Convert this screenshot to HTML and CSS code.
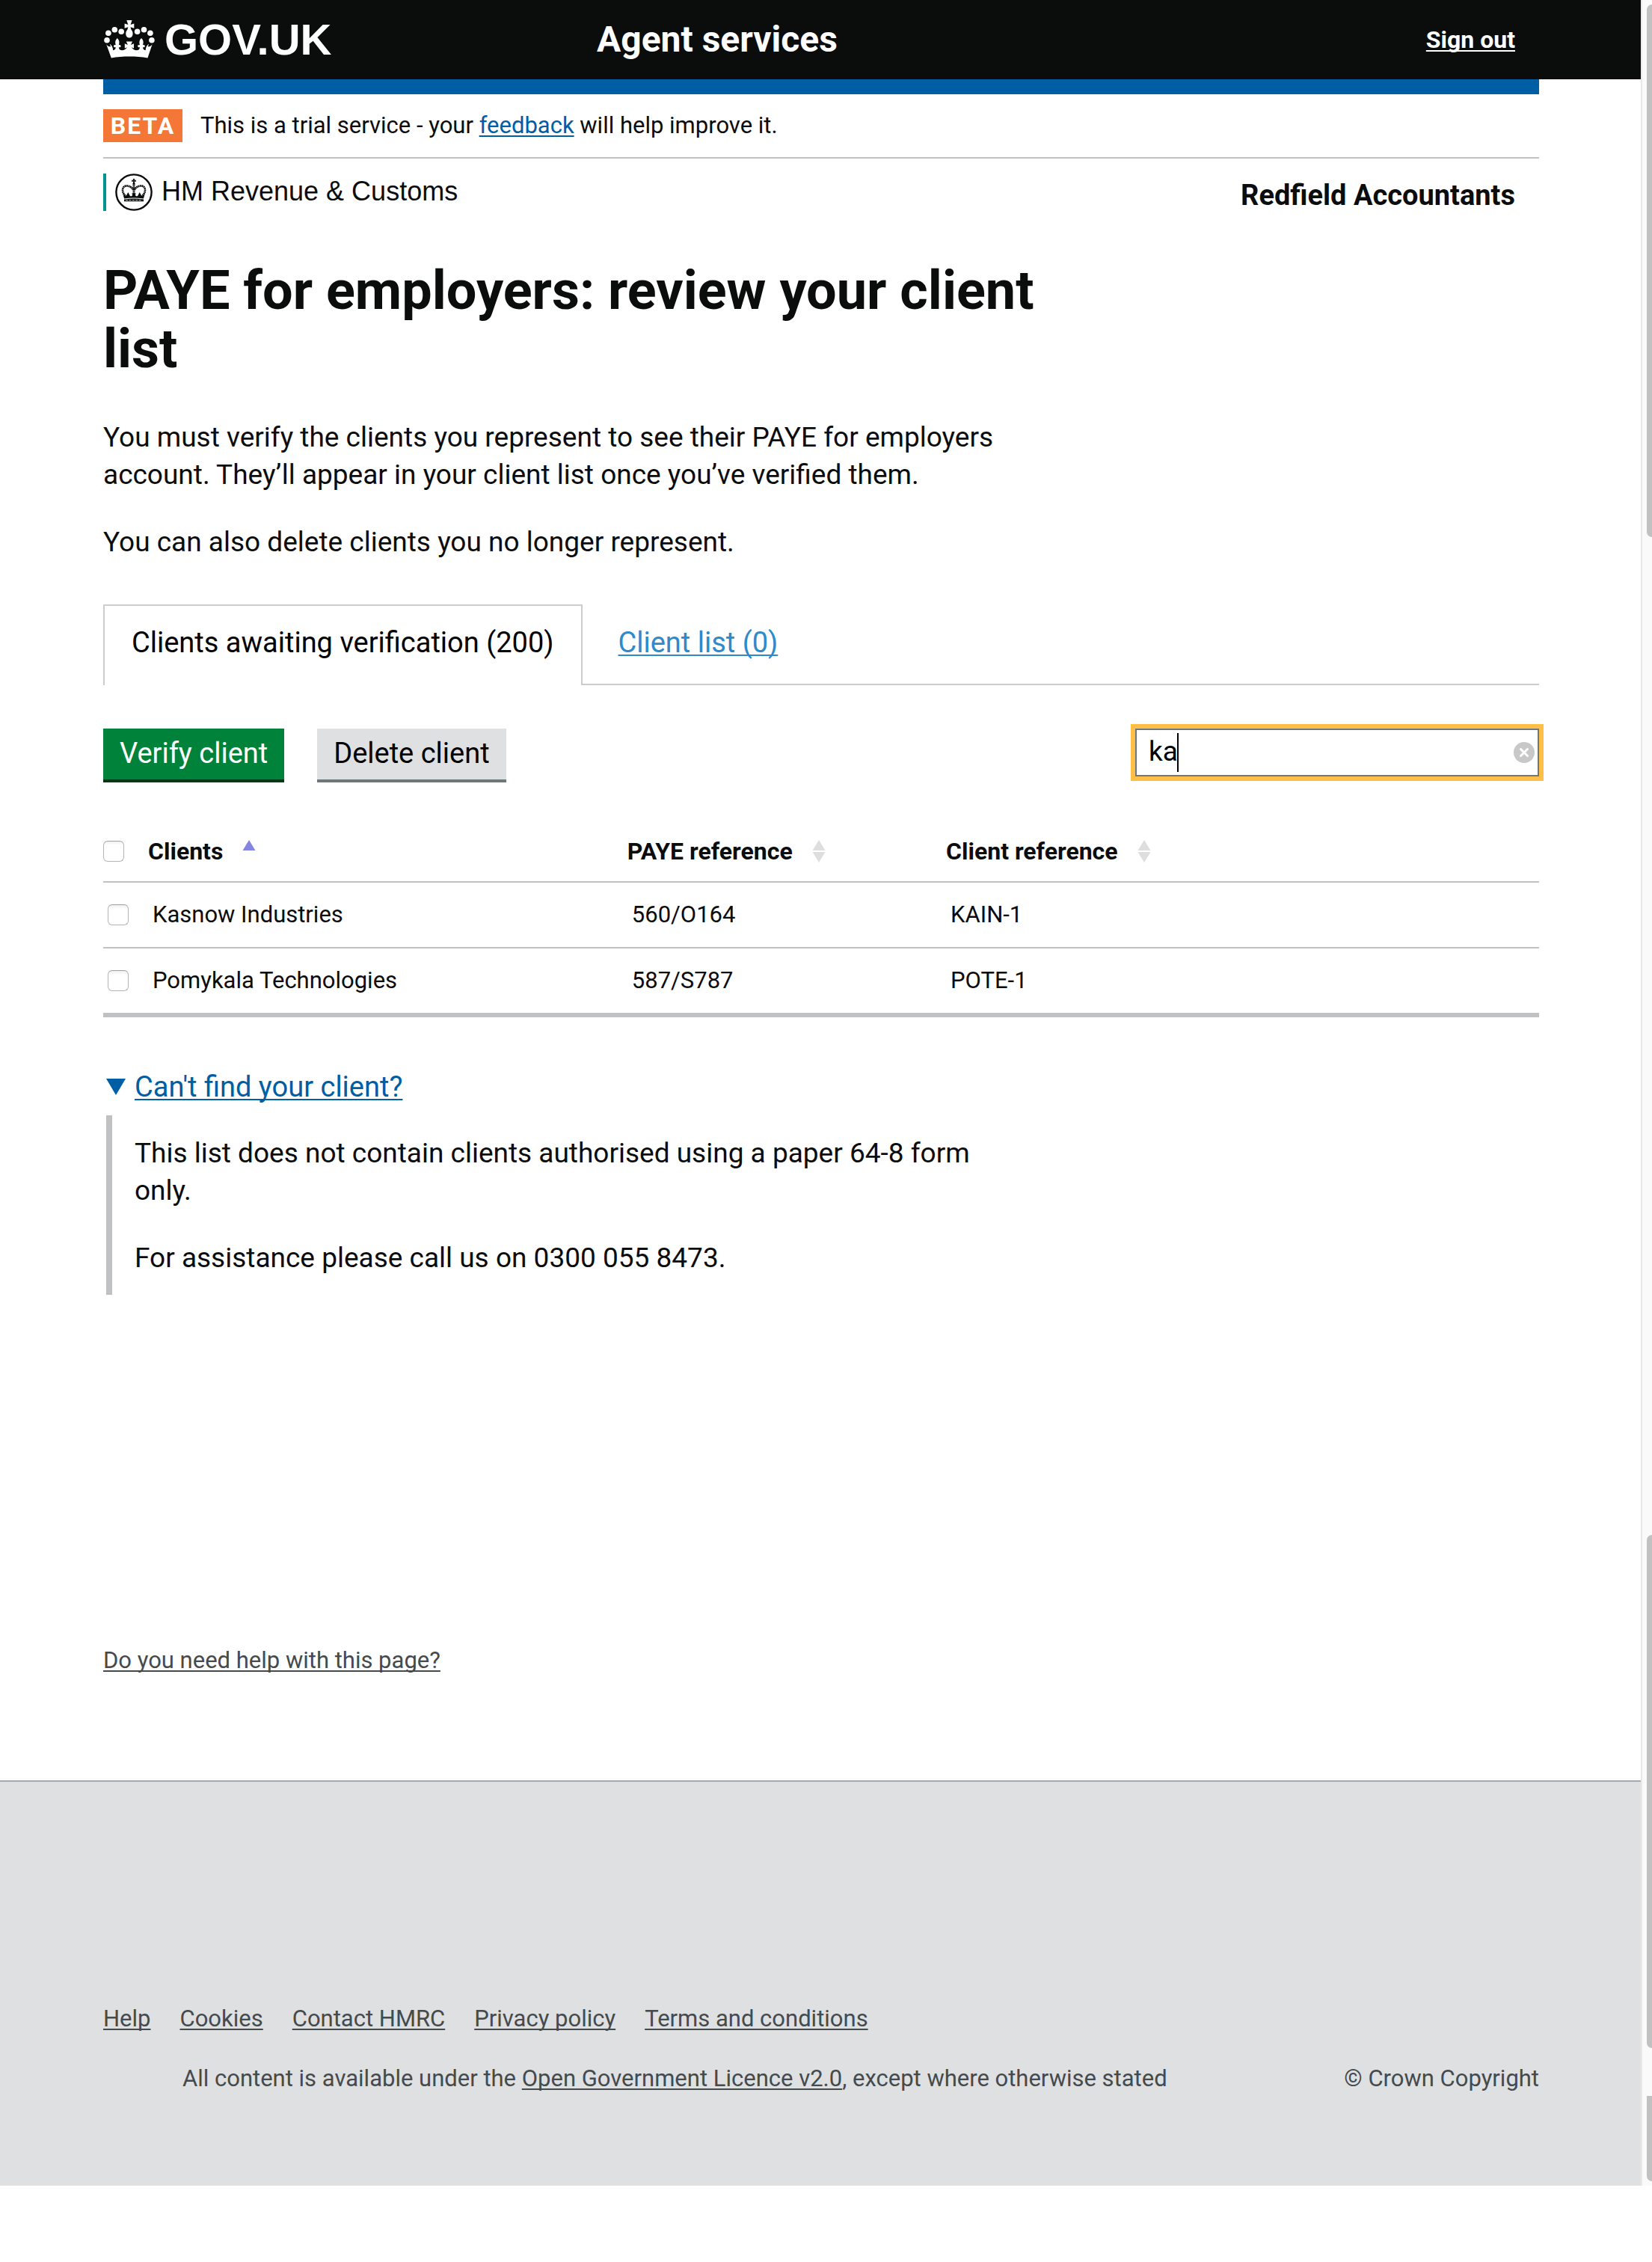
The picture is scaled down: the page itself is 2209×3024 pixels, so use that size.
FILE: index.html
```
<!DOCTYPE html>
<html lang="en">
<head>
<meta charset="utf-8">
<meta name="viewport" content="width=device-width, initial-scale=1">
<title>PAYE for employers: review your client list</title>
<link rel="stylesheet" href="styles.css">
</head>
<body>
<div class="window">
  <div class="page">
    <header class="site-header">
      <div class="container site-header__row">
        <a class="brand" href="#">
          <svg class="brand__crown" viewBox="0 0 70 52" width="70" height="52" fill="#fff" aria-hidden="true">
            <circle cx="5" cy="26.7" r="3.8"/><circle cx="6.9" cy="17.3" r="3.8"/><circle cx="15.3" cy="12.7" r="3.8"/><circle cx="24.2" cy="15.3" r="3.8"/>
            <circle cx="45.6" cy="15.3" r="3.8"/><circle cx="54.5" cy="12.7" r="3.8"/><circle cx="62.9" cy="17.3" r="3.8"/><circle cx="64.9" cy="26.7" r="3.8"/>
            <path d="M31.3 0h7.2l-1.9 6 4.7-1.6v6.4L36.500 9.300l.9 3.200c1.600 2 2.500 4 2.100 6.700-.4 2.700-2.200 4.400-4.600 4.400s-4.200-1.700-4.600-4.400c-.4-2.700.5-4.700 2.100-6.700l.9-3.200-4.700 1.500V4.400L33.300 6z"/>
            <path d="M4.200 32.200c1.800 2.400 3.800 3.300 6 3.100l-1.600-3.600c2.600 1.300 4.500 4.600 4.600 8.600 2.500-.6 3.700-2.400 3.500-4.400-.8.8-2.400.6-2.700-.8-.3-1.500 1.100-2.500 2.800-1.900-1.400-3.500-.5-7 2-9.200 2.500 2.200 3.400 5.700 2 9.200 1.700-.6 3.100.4 2.800 1.900-.3 1.400-1.900 1.600-2.700.8-.1 2.600 1.500 4.400 4.400 4.400 2.600 0 4.700-1.500 6.700-4l-3.200 1.300v-6.400l4 1.800-2-4.600h8.200l-2 4.600 4-1.800v6.400l-3.200-1.300c2 2.500 4.100 4 6.700 4 2.900 0 4.500-1.800 4.400-4.400-.8.8-2.400.6-2.700-.8-.3-1.500 1.100-2.500 2.800-1.900-1.400-3.500-.5-7 2-9.200 2.500 2.200 3.400 5.700 2 9.200 1.700-.6 3.100.4 2.800 1.900-.3 1.400-1.900 1.600-2.700.8-.2 2 1 3.800 3.500 4.400.1-4 2-7.300 4.600-8.600l-1.600 3.600c2.200.2 4.200-.7 6-3.100l-6.200 18.200c-15.200-2.600-33.400-2.600-48.600 0z"/>
          </svg>
          <span class="brand__name">GOV.UK</span>
        </a>
        <a class="service-name" href="#">Agent services</a>
        <a class="sign-out" href="#">Sign out</a>
      </div>
    </header>

    <div class="container">
      <div class="brand-bar"></div>
      <div class="phase">
        <strong class="phase__tag">BETA</strong>
        <span>This is a trial service - your <a href="#">feedback</a> will help improve it.</span>
      </div>
      <div class="organisation">
        <div class="hmrc">
          <svg class="hmrc__crest" viewBox="0 0 50 50" width="50" height="50" aria-hidden="true">
            <circle cx="25" cy="25" r="23.600" fill="none" stroke="#0b0c0c" stroke-width="2.400"/>
            <g fill="none" stroke="#0b0c0c">
              <path d="M13.500 29.500C8.500 25 9 17.500 14 16.600c4.500-.8 9 2 10 5.400M36.500 29.500C41.500 25 41 17.500 36 16.600c-4.500-.8-9 2-10 5.400" stroke-width="2.600" stroke-dasharray="1.900 .5"/>
              <path d="M25 13v16" stroke-width="3" stroke-dasharray="2 .6"/>
            </g>
            <g fill="#0b0c0c">
              <path d="M23.800 7h2.400l-.5 2 2.100-.5v2.600l-2.100-.5.6 2.600h-2.600l.6-2.600-2.100.5V8.500l2.100.5z"/>
              <path d="M10.500 28c2 2.200 4.200 2.400 5.200 0l1.600-3 1.600 3c.8 2.800 3.200 3 4.300.8l-1-2.300h5.600l-1 2.300c1.100 2.200 3.500 2 4.300-.8l1.600-3 1.600 3c1 2.400 3.200 2.200 5.200 0l-1.600 5.400c-8.600-1.300-17.200-1.300-25.800 0z"/>
              <path d="M12 34.400c8.600-1.200 17.400-1.200 26 0v2.800H12z"/>
            </g>
            <path d="M14 35.700h22" stroke="#fff" stroke-width=".8" stroke-dasharray="3 1.400"/>
          </svg>
          <span class="hmrc__name">HM Revenue &amp; Customs</span>
        </div>
        <strong class="organisation__agent">Redfield Accountants</strong>
      </div>

      <main>
        <h1 class="title">PAYE for employers: review your client list</h1>
        <div class="intro">
          <p>You must verify the clients you represent to see their PAYE for employers account. They’ll appear in your client list once you’ve verified them.</p>
          <p>You can also delete clients you no longer represent.</p>
        </div>

        <ul class="tabs">
          <li class="tabs__item tabs__item--selected"><a href="#awaiting">Clients awaiting verification (200)</a></li>
          <li class="tabs__item"><a href="#list">Client list (0)</a></li>
        </ul>

        <form class="toolbar">
          <button class="button button--primary" type="button">Verify client</button>
          <button class="button" type="button">Delete client</button>
          <div class="search">
            <input class="search__input" type="text" value="ka" aria-label="Search clients">
            <span class="search__caret"></span>
            <button class="search__clear" type="button" aria-label="Clear search">
              <svg viewBox="0 0 28 28" width="28" height="28" aria-hidden="true"><circle cx="14" cy="14" r="14" fill="#c8c8c8"/><path d="M9.500 9.500l9 9M18.500 9.500l-9 9" stroke="#fff" stroke-width="3" stroke-linecap="round"/></svg>
            </button>
          </div>
        </form>

        <table class="clients">
          <colgroup><col class="clients__name"><col class="clients__paye"><col></colgroup>
          <thead>
            <tr>
              <th scope="col">
                <div class="cell">
                  <input class="tick" type="checkbox" id="all" aria-label="Select all clients">
                  <button class="sort" type="button">Clients
                    <svg viewBox="0 0 18 30" width="18" height="30" aria-hidden="true"><path d="M9 0l8.500 14H.5z" fill="#8486e2"/></svg>
                  </button>
                </div>
              </th>
              <th scope="col">
                <button class="sort" type="button">PAYE reference
                  <svg viewBox="0 0 18 30" width="18" height="30" aria-hidden="true" fill="#dedede"><path d="M9 0l8.500 14H.5zM9 30l8.500-14H.5z"/></svg>
                </button>
              </th>
              <th scope="col">
                <button class="sort" type="button">Client reference
                  <svg viewBox="0 0 18 30" width="18" height="30" aria-hidden="true" fill="#dedede"><path d="M9 0l8.500 14H.5zM9 30l8.500-14H.5z"/></svg>
                </button>
              </th>
            </tr>
          </thead>
          <tbody>
            <tr>
              <td><div class="cell"><input class="tick" type="checkbox" id="kasnow"><label for="kasnow">Kasnow Industries</label></div></td>
              <td>560/O164</td>
              <td>KAIN-1</td>
            </tr>
            <tr>
              <td><div class="cell"><input class="tick" type="checkbox" id="pomykala"><label for="pomykala">Pomykala Technologies</label></div></td>
              <td>587/S787</td>
              <td>POTE-1</td>
            </tr>
          </tbody>
        </table>

        <details class="details" open>
          <summary class="details__summary">
            <svg viewBox="0 0 26 22" width="26" height="22" aria-hidden="true"><path d="M0 0h26L13 22z" fill="#005ea5"/></svg>
            <span>Can't find your client?</span>
          </summary>
          <div class="details__text">
            <p>This list does not contain clients authorised using a paper 64-8 form only.</p>
            <p>For assistance please call us on 0300 055 8473.</p>
          </div>
        </details>

        <div class="page-help"><a href="#">Do you need help with this page?</a></div>
      </main>
    </div>

    <footer class="footer">
      <div class="container">
        <ul class="footer__links">
          <li><a href="#">Help</a></li>
          <li><a href="#">Cookies</a></li>
          <li><a href="#">Contact HMRC</a></li>
          <li><a href="#">Privacy policy</a></li>
          <li><a href="#">Terms and conditions</a></li>
        </ul>
        <div class="footer__meta">
          <span>All content is available under the <a href="#">Open Government Licence v2.0</a>, except where otherwise stated</span>
          <span>© Crown Copyright</span>
        </div>
      </div>
    </footer>
  </div>
  <div class="scrollbar" aria-hidden="true">
    <span class="scrollbar__thumb scrollbar__thumb--top"></span>
    <span class="scrollbar__thumb scrollbar__thumb--middle"></span>
    <span class="scrollbar__thumb scrollbar__thumb--end"></span>
  </div>
</div>
</body>
</html>
```
FILE: styles.css
```
* {
  box-sizing: border-box;
}

body {
  margin: 0;
  background: #fff;
  color: #0b0c0c;
  font: 37px/50px Roboto, "Liberation Sans", sans-serif;
}

p,
ul,
h1 {
  margin: 0;
  padding: 0;
}

ul {
  list-style: none;
}

button {
  margin: 0;
  font: inherit;
  color: inherit;
  cursor: pointer;
}

a,
.details__summary span {
  color: #005ea5;
  text-decoration: underline;
  text-decoration-thickness: 2px;
  text-underline-offset: 3px;
  text-decoration-skip-ink: none;
}

.window {
  display: grid;
  grid-template-columns: minmax(0, 1fr) 13px;
}

.container {
  max-width: 1920px;
  margin: 0 auto;
}

/* Header */

.site-header {
  background: #0b0c0c;
}

.site-header__row {
  display: grid;
  grid-template-columns: 660px 1fr auto;
  align-items: center;
  height: 106px;
  padding-right: 32px;
}

.site-header a {
  color: #fff;
}

.brand {
  display: flex;
  align-items: center;
  gap: 12px;
}

.site-header .brand,
.site-header .service-name {
  text-decoration: none;
}

.brand__name {
  font: bold 58px/66px "Liberation Sans", Arial, sans-serif;
}

.service-name {
  font-size: 48px;
  font-weight: 700;
}

.sign-out {
  font-size: 32px;
  font-weight: 700;
}

.brand-bar {
  height: 20px;
  background: #005ea5;
}

.phase {
  display: flex;
  gap: 24px;
  padding: 20px 0;
  border-bottom: 2px solid #bfc1c3;
  font-size: 31px;
  line-height: 44px;
}

.phase__tag {
  min-width: 106px;
  background: #f47738;
  color: #fff;
  font-size: 32px;
  letter-spacing: 2px;
  text-align: center;
}

.organisation {
  display: flex;
  justify-content: space-between;
  padding: 20px 32px 0 0;
}

.hmrc {
  display: flex;
  gap: 12px;
  height: 50px;
  padding-left: 12px;
  border-left: 4px solid #009390;
}

.hmrc__name {
  font: 36px/48px "Liberation Sans", Arial, sans-serif;
}

.organisation__agent {
  font-size: 38px;
  line-height: 58px;
}

/* Introduction */

.title {
  max-width: 1300px;
  padding-top: 60px;
  font-size: 72px;
  line-height: 78px;
}

.intro {
  display: grid;
  gap: 40px;
  max-width: 1280px;
  margin: 54px 0 58px;
}

/* Tabs */

.tabs {
  display: flex;
  border-bottom: 2px solid #ccc;
  font-size: 38px;
}

.tabs__item {
  padding: 26px 48px 30px;
}

.tabs__item a {
  color: #2e8aca;
}

.tabs__item--selected {
  margin-bottom: -2px;
  padding: 24px 36px 32px;
  border: 2px solid #ccc;
  border-bottom: 0;
  background: #fff;
}

.tabs__item--selected a {
  color: #000;
  text-decoration: none;
}

/* Actions and search */

.toolbar {
  display: flex;
  align-items: flex-start;
  gap: 44px;
  margin: 58px 0 52px;
}

.button {
  padding: 8px 22px 10px;
  border: 0;
  border-bottom: 4px solid #6f777b;
  background: #dee0e2;
  color: #000;
  font-size: 38px;
}

.button--primary {
  border-color: #003618;
  background: #00823b;
  color: #fff;
}

.search {
  position: relative;
  width: 540px;
  height: 64px;
  margin-left: auto;
}

.search__input {
  display: block;
  width: 100%;
  height: 100%;
  padding: 0 40px 4px 16px;
  border: 2px solid #6f777b;
  border-radius: 0;
  outline: 0;
  box-shadow: 0 0 0 6px #ffbf47;
  background: #fff;
  color: #000;
  font: inherit;
}

.search__caret {
  position: absolute;
  top: 6px;
  left: 56px;
  width: 2px;
  height: 52px;
  background: #000;
}

.search__clear {
  position: absolute;
  top: 18px;
  right: 6px;
  width: 28px;
  height: 28px;
  padding: 0;
  border: 0;
  background: none;
}

.search__clear svg {
  display: block;
}

/* Clients table */

.clients {
  width: 100%;
  table-layout: fixed;
  border-collapse: separate;
  border-spacing: 0;
  font-size: 31px;
  line-height: 40px;
  text-align: left;
}

.clients__name {
  width: 36.5%;
}

.clients__paye {
  width: 22.2%;
}

.clients th {
  padding: 20px 0;
  border-bottom: 2px solid #bfc1c3;
  font-size: 32px;
}

.clients td {
  padding: 23px 6px;
  border-bottom: 2px solid #bfc1c3;
}

.clients tbody tr:last-child td {
  border-bottom-width: 6px;
}

.cell {
  display: flex;
  align-items: center;
  gap: 32px;
}

.tick {
  appearance: none;
  width: 28px;
  height: 28px;
  margin: 0;
  border: 1px solid #b4b4b4;
  border-top-color: #a0a0a0;
  border-radius: 6px;
  background: linear-gradient(#f0f0f0, #fff 5px);
}

.sort {
  display: flex;
  align-items: center;
  gap: 26px;
  padding: 0;
  border: 0;
  background: none;
}

/* Details */

.details {
  max-width: 1200px;
  padding: 68px 0 0 4px;
}

.details__summary {
  display: flex;
  align-items: center;
  gap: 12px;
  font-size: 38px;
  list-style: none;
  cursor: pointer;
}

.details__text {
  display: grid;
  gap: 40px;
  margin-top: 13px;
  padding: 26px 0 24px 30px;
  border-left: 8px solid #bfc1c3;
}

.page-help {
  padding: 469px 0 140px;
  font-size: 31px;
  line-height: 40px;
}

.page-help a,
.footer a {
  color: #454a4d;
}

/* Footer */

.footer {
  padding: 297px 0 123px;
  border-top: 2px solid #a1acb2;
  background: #dee0e2;
  color: #454a4d;
  font-size: 31px;
  line-height: 40px;
}

.footer__links {
  display: flex;
  gap: 39px;
  margin-bottom: 40px;
}

.footer__meta {
  display: flex;
  justify-content: space-between;
  padding-left: 106px;
}

/* Scroll gutter */

.scrollbar {
  display: flex;
  flex-direction: column;
  align-items: flex-end;
  margin-left: -2px;
  border-left: 2px solid #e8e8e8;
  background: #fafafa;
}

.scrollbar__thumb {
  width: 7px;
  border-radius: 7px 0 0 7px;
  background: #c1c1c1;
}

.scrollbar__thumb--top {
  height: 712px;
  margin-top: 6px;
}

.scrollbar__thumb--middle {
  height: 686px;
  margin-top: 1334px;
}

.scrollbar__thumb--end {
  height: 114px;
  margin-top: 64px;
  border-top-left-radius: 0;
}
```
